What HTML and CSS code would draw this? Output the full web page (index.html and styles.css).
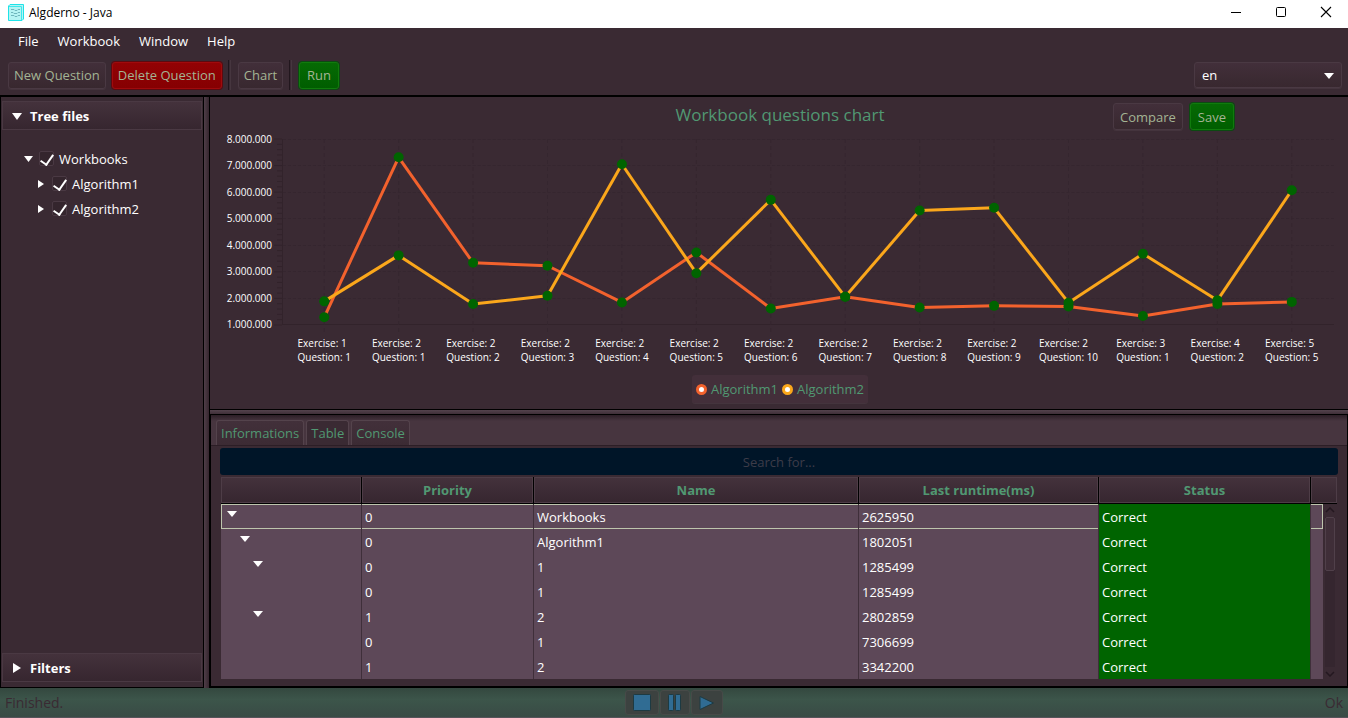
FILE: index.html
```html
<!DOCTYPE html>
<html lang="en">
<head>
<meta charset="utf-8">
<title>Algderno - Java</title>
<link rel="stylesheet" href="styles.css">
</head>
<body>
<header class="titlebar">
  <svg class="app-icon" width="16" height="17" viewBox="0 0 16 17" aria-hidden="true">
    <path d="M2 0.500H15.500V15L14 16.500H0.500V2Z" fill="#b5f3f3" stroke="#1fe3e8"/>
    <path d="M1 2.500H13.500V16" fill="none" stroke="#3ee9ec"/>
    <path d="M3 5.500h3l1 1h2l1-1h2M3 8.500h2l1 1h3l1-1h2M3 11.500h3l1 1h2l1-1h2" fill="none" stroke="#6fb6bd"/>
  </svg>
  <h1 class="window-title">Algderno - Java</h1>
  <div class="window-controls">
    <button class="window-button" aria-label="Minimize"><svg width="12" height="12"><path d="M1 6.500h10" stroke="#000"/></svg></button>
    <button class="window-button" aria-label="Maximize"><svg width="12" height="12"><rect x="1.500" y="1.500" width="9" height="9" rx="1" fill="none" stroke="#000"/></svg></button>
    <button class="window-button" aria-label="Close"><svg width="12" height="12"><path d="M1 1l10 10M11 1L1 11" stroke="#000" stroke-width="1.100"/></svg></button>
  </div>
</header>

<nav class="menubar">
  <button class="menu">File</button>
  <button class="menu">Workbook</button>
  <button class="menu">Window</button>
  <button class="menu">Help</button>
</nav>

<div class="toolbar">
  <button class="btn">New Question</button>
  <button class="btn btn-danger">Delete Question</button>
  <span class="separator"></span>
  <button class="btn">Chart</button>
  <span class="separator"></span>
  <button class="btn btn-ok">Run</button>
  <div class="language">
    <select class="language-select" aria-label="Language"><option>en</option></select>
    <svg class="language-arrow" width="10" height="6" aria-hidden="true"><path d="M0 0H10L5 6Z" fill="#fff"/></svg>
  </div>
</div>

<main class="workspace">
  <aside class="sidebar">
    <button class="pane-title"><svg width="10" height="10"><path d="M0 2H10L5 9Z" fill="#fff"/></svg>Tree files</button>
    <ul class="tree">
      <li class="tree-row"><svg width="10" height="10"><path d="M1 2H10L5.500 8Z" fill="#fff"/></svg><label class="tree-label"><input class="check" type="checkbox" checked>Workbooks</label></li>
      <li class="tree-row tree-child"><svg width="10" height="10"><path d="M2 1V9L8 5Z" fill="#fff"/></svg><label class="tree-label"><input class="check" type="checkbox" checked>Algorithm1</label></li>
      <li class="tree-row tree-child"><svg width="10" height="10"><path d="M2 1V9L8 5Z" fill="#fff"/></svg><label class="tree-label"><input class="check" type="checkbox" checked>Algorithm2</label></li>
    </ul>
    <button class="pane-title pane-last"><svg width="10" height="10"><path d="M1 0V10L9 5Z" fill="#fff"/></svg>Filters</button>
  </aside>
  <div class="divider-v"></div>

  <div class="content">
    <section class="chart">
      <div class="chart-head">
        <h2 class="chart-title">Workbook questions chart</h2>
        <div class="chart-actions">
          <button class="btn">Compare</button>
          <button class="btn btn-ok">Save</button>
        </div>
      </div>
      <div class="chart-body">
        <div class="y-axis">
          <span>8.000.000</span><span>7.000.000</span><span>6.000.000</span><span>5.000.000</span><span>4.000.000</span><span>3.000.000</span><span>2.000.000</span><span>1.000.000</span>
        </div>
        <div class="plot">
          <div class="grid-rows"><i></i><i></i><i></i><i></i><i></i><i></i><i></i></div>
          <svg class="plot-lines" id="plot" role="img" aria-label="Runtime of each question for both algorithms"></svg>
        </div>
        <div class="x-axis">
          <span>Exercise: 1<br>Question: 1</span>
          <span>Exercise: 2<br>Question: 1</span>
          <span>Exercise: 2<br>Question: 2</span>
          <span>Exercise: 2<br>Question: 3</span>
          <span>Exercise: 2<br>Question: 4</span>
          <span>Exercise: 2<br>Question: 5</span>
          <span>Exercise: 2<br>Question: 6</span>
          <span>Exercise: 2<br>Question: 7</span>
          <span>Exercise: 2<br>Question: 8</span>
          <span>Exercise: 2<br>Question: 9</span>
          <span>Exercise: 2<br>Question: 10</span>
          <span>Exercise: 3<br>Question: 1</span>
          <span>Exercise: 4<br>Question: 2</span>
          <span>Exercise: 5<br>Question: 5</span>
        </div>
      </div>
      <div class="legend">
        <span class="legend-item"><i class="symbol symbol-1"></i>Algorithm1</span>
        <span class="legend-item"><i class="symbol symbol-2"></i>Algorithm2</span>
      </div>
    </section>
    <div class="divider-h"></div>

    <section class="details">
      <div class="tabs" role="tablist">
        <button class="tab" role="tab">Informations</button>
        <button class="tab tab-active" role="tab" aria-selected="true">Table</button>
        <button class="tab" role="tab">Console</button>
      </div>
      <div class="tab-body">
        <input class="search" type="text" placeholder="Search for..." aria-label="Search">
        <div class="table-wrap">
          <table class="results">
            <colgroup><col class="c-tree"><col class="c-priority"><col><col class="c-runtime"><col class="c-status"><col class="c-end"></colgroup>
            <thead><tr><th></th><th>Priority</th><th>Name</th><th>Last runtime(ms)</th><th>Status</th><th></th></tr></thead>
            <tbody>
              <tr class="focused"><td><svg class="level-0" width="10" height="10"><path d="M0 1H10L5 7Z" fill="#fff"/></svg></td><td>0</td><td>Workbooks</td><td>2625950</td><td class="correct">Correct</td><td></td></tr>
              <tr><td><svg class="level-1" width="10" height="10"><path d="M0 1H10L5 7Z" fill="#fff"/></svg></td><td>0</td><td>Algorithm1</td><td>1802051</td><td class="correct">Correct</td><td></td></tr>
              <tr><td><svg class="level-2" width="10" height="10"><path d="M0 1H10L5 7Z" fill="#fff"/></svg></td><td>0</td><td>1</td><td>1285499</td><td class="correct">Correct</td><td></td></tr>
              <tr><td></td><td>0</td><td>1</td><td>1285499</td><td class="correct">Correct</td><td></td></tr>
              <tr><td><svg class="level-2" width="10" height="10"><path d="M0 1H10L5 7Z" fill="#fff"/></svg></td><td>1</td><td>2</td><td>2802859</td><td class="correct">Correct</td><td></td></tr>
              <tr><td></td><td>0</td><td>1</td><td>7306699</td><td class="correct">Correct</td><td></td></tr>
              <tr><td></td><td>1</td><td>2</td><td>3342200</td><td class="correct">Correct</td><td></td></tr>
            </tbody>
          </table>
          <div class="scrollbar">
            <svg width="10" height="6"><path d="M1 5L5 1L9 5" fill="none" stroke="#241820" stroke-width="1.500"/></svg>
            <div class="track"><div class="thumb"></div></div>
            <svg width="10" height="6"><path d="M1 1L5 5L9 1" fill="none" stroke="#241820" stroke-width="1.500"/></svg>
          </div>
        </div>
      </div>
    </section>
  </div>
</main>

<footer class="statusbar">
  <span>Finished.</span>
  <div class="player">
    <button class="player-button" aria-label="Stop"><svg width="18" height="18"><rect x="0.500" y="0.500" width="17" height="16" rx="1" fill="#306c93" stroke="#1d3a42"/></svg></button>
    <button class="player-button" aria-label="Pause"><svg width="14" height="18"><rect x="0.500" y="0.500" width="5" height="16" rx="1" fill="#306c93" stroke="#1d3a42"/><rect x="7.500" y="0.500" width="5" height="16" rx="1" fill="#306c93" stroke="#1d3a42"/></svg></button>
    <button class="player-button" aria-label="Play"><svg width="16" height="16"><path d="M1 1.500V14.500L14.500 8Z" fill="#306c93" stroke="#1d3a42"/></svg></button>
  </div>
  <span class="status-right">Ok</span>
</footer>
<script src="chart.js"></script>
</body>
</html>
```

FILE: styles.css
```css
* { box-sizing: border-box; }

body {
  margin: 0;
  min-height: 100vh;
  display: flex;
  flex-direction: column;
  background: #3a2a33;
  color: #fff;
  font: 13px/18px "Open Sans", "Noto Sans", sans-serif;
}

button, input, select { font: inherit; color: inherit; margin: 0; }
button { border: 0; background: none; padding: 0; }
svg { display: block; flex: none; }

.titlebar {
  display: flex;
  align-items: center;
  height: 28px;
  padding-left: 8px;
  gap: 5px;
  background: #fff;
  color: #000;
}
.app-icon { margin-bottom: 3px; }
.window-title { margin: 0 auto 2px 0; font-size: 12px; font-weight: 400; }
.window-controls { display: flex; margin-bottom: 4px; }
.window-button { display: flex; justify-content: center; width: 45px; }

.menubar { display: flex; height: 27px; padding: 0 0 2px 8px; }
.menu { padding: 0 9px 0 10px; }

.toolbar {
  display: flex;
  align-items: center;
  gap: 6px;
  height: 42px;
  padding: 0 6px 0 8px;
  border-bottom: 2px solid #000;
}
.btn {
  height: 27px;
  padding: 0 6px;
  border: 1px solid #4a3943;
  border-radius: 3px;
  background: linear-gradient(#422f3a, #38282f);
  box-shadow: 0 1px 0 #44343d;
  color: #a4b494;
}
.toolbar .btn { padding: 0 5px; }
.btn-danger { background: linear-gradient(#920204, #860002); border-color: #a10a0c; box-shadow: 0 0 0 1px #5c0a10; }
.btn-ok, .toolbar .btn-ok { padding: 0 7px; }
.btn-ok { background: linear-gradient(#066a04, #005e00); border-color: #107c0c; box-shadow: 0 0 0 1px #0c4a12; }
.separator { width: 3px; height: 30px; margin-right: 1px; border-left: 1px solid #21161d; border-right: 1px solid #46363f; }
.language { position: relative; width: 148px; margin-left: auto; }
.language-select {
  display: block;
  appearance: none;
  width: 100%;
  height: 26px;
  padding: 0 7px;
  border: 1px solid #4a3943;
  border-radius: 3px;
  background: linear-gradient(#422f3a, #38282f);
  box-shadow: 0 1px 0 #44343d;
}
.language-arrow { position: absolute; right: 8px; top: 11px; }

.workspace { flex: 1; display: flex; }
.sidebar {
  display: flex;
  flex-direction: column;
  width: 204px;
  padding: 4px 1px 5px;
  border: 1px solid #000;
  border-width: 0 1px 1px;
}
.pane-title {
  display: flex;
  align-items: center;
  gap: 8px;
  height: 29px;
  padding: 0 9px;
  border: 1px solid #4a3943;
  background: linear-gradient(#44323c, #36262f);
  font-weight: 700;
}
.pane-last { margin-top: auto; }
.tree { margin: 0; padding: 16px 0 0 21px; list-style: none; }
.tree-row { display: flex; align-items: center; gap: 6px; height: 25px; }
.tree-child { padding-left: 13px; }
.tree-label { display: flex; align-items: center; gap: 5px; }
.check {
  appearance: none;
  width: 15px;
  height: 15px;
  border: 1px solid #4a3943;
  border-radius: 2px;
  background: #34252d;
}
.check:checked::before {
  content: "";
  display: block;
  width: 6px;
  height: 11px;
  margin: 0 0 0 3px;
  border: solid #fff;
  border-width: 0 2px 2px 0;
  transform: rotate(35deg);
}
.divider-v { width: 6px; border-right: 1px solid #000; background: linear-gradient(90deg, #4f3e48, #36262f); }

.content { flex: 1; min-width: 0; display: flex; flex-direction: column; }
.chart { display: flex; flex-direction: column; padding: 4px 14px 6px 16px; }
.chart-head { display: grid; height: 36px; }
.chart-title {
  grid-area: 1 / 1;
  justify-self: center;
  margin: 0;
  font-size: 17px;
  line-height: 28px;
  font-weight: 400;
  color: #519872;
}
.chart-actions { grid-area: 1 / 1; justify-self: end; display: flex; gap: 7px; margin-right: 100px; padding-top: 2px; }
.chart-body { display: grid; grid-template-columns: 56px 1fr; grid-template-rows: 186px auto; padding-top: 2px; }
.y-axis {
  display: flex;
  flex-direction: column;
  justify-content: space-between;
  margin: -7px 10px -6px 0;
  text-align: right;
  font-size: 10px;
  line-height: 14px;
}
.plot { display: grid; border-left: 1px solid #32232b; }
.grid-rows { grid-area: 1 / 1; display: grid; grid-template-rows: repeat(7, 1fr); border-bottom: 1px solid #32232b; }
.grid-rows i { border-top: 1px dashed #35262f; }
.plot-lines { grid-area: 1 / 1; width: calc(100% - 9px); height: 100%; margin: 0 5px 0 4px; overflow: visible; }
.grid-col { stroke: #35262f; stroke-dasharray: 4 3; }
.series { stroke-width: 3; }
.series-1 { stroke: #f3622d; }
.series-2 { stroke: #fba71b; }
.marker { fill: #006400; }
.x-axis {
  grid-column: 2;
  display: grid;
  grid-template-columns: repeat(14, 1fr);
  justify-items: center;
  padding: 11px 5px 0;
  font-size: 10px;
  line-height: 14px;
  white-space: nowrap;
}
.legend {
  align-self: center;
  display: flex;
  gap: 4px;
  height: 28px;
  margin-top: 11px;
  padding: 4px;
  border-radius: 3px;
  background: #432f3a;
  box-shadow: 0 1px 0 #44343d;
  color: #519872;
}
.legend-item { display: flex; align-items: center; gap: 4px; }
.symbol { width: 11px; height: 11px; border: 3px solid #f3622d; border-radius: 50%; background: #fff; }
.symbol-2 { border-color: #fba71b; }
.divider-h { height: 6px; border: solid #000; border-width: 1px 0; background: linear-gradient(#54434d, #3f2f38); }

.details { flex: 1; display: flex; flex-direction: column; border: 1px solid #000; border-width: 0 1px 2px; }
.tabs {
  display: flex;
  align-items: flex-end;
  gap: 2px;
  height: 31px;
  padding-left: 5px;
  border-bottom: 1px solid #2c1e26;
  background: linear-gradient(#2c1e26, #47353f 6px);
}
.tab {
  height: 25px;
  padding: 0 4px;
  border: 1px solid #54434c;
  border-bottom: 0;
  border-radius: 3px 3px 0 0;
  background: linear-gradient(#42303a, #3c2b34);
  color: #519872;
}
.tab-active { background: #3a2a33; }
.tab-body { flex: 1; padding: 2px 9px 6px; }
.search {
  display: block;
  width: 100%;
  height: 27px;
  border: 0;
  border-radius: 3px;
  background: #001528;
  text-align: center;
}
.search::placeholder { color: #3d3c48; opacity: 1; }
.table-wrap { position: relative; margin: 2px 1px 0; }
.results { width: 100%; table-layout: fixed; border-collapse: separate; border-spacing: 0; }
.c-tree { width: 141px; }
.c-priority { width: 172px; }
.c-runtime { width: 240px; }
.c-status { width: 212px; }
.c-end { width: 26px; }
.results th {
  height: 27px;
  padding: 0;
  border-right: 1px solid #000;
  border-bottom: 1px solid #000;
  background: linear-gradient(#44323c, #36262f);
  box-shadow: inset 0 0 0 1px #4e3d47;
  color: #519872;
}
.results th:last-child { border-right: 0; }
.results td { height: 25px; padding: 0 3px; border-right: 1px solid #3f2f3a; background: #5d4858; }
.results td:last-child { border-right: 0; }
.focused td { box-shadow: inset 0 1px #bec5ad, inset 0 -1px #bec5ad; }
.focused td:first-child { box-shadow: inset 1px 1px #bec5ad, inset 0 -1px #bec5ad; }
.results .correct { background: #006400; box-shadow: none; }
.level-0 { margin: 0 0 4px 3px; }
.level-1 { margin: 0 0 4px 16px; }
.level-2 { margin: 0 0 4px 29px; }
.scrollbar {
  position: absolute;
  top: 27px;
  right: 0;
  bottom: 0;
  width: 14px;
  display: flex;
  flex-direction: column;
  align-items: center;
  gap: 4px;
  padding: 3px 0 2px;
  background: #3a2a33;
}
.scrollbar::before { content: ""; position: absolute; left: -1px; top: 0; width: 1px; height: 25px; background: #bec5ad; }
.track { flex: 1; width: 10px; background: #35262f; }
.thumb { height: 36%; border: 1px solid #50404a; border-radius: 2px; background: #3f2e38; }

.statusbar {
  display: grid;
  grid-template-columns: 1fr auto 1fr;
  align-items: center;
  height: 30px;
  padding: 0 5px;
  border-bottom: 1px solid #55545a;
  background: linear-gradient(#34483f, #3c554a 40%, #394b45);
  color: #3a2a33;
  font-size: 14px;
}
.status-right { justify-self: end; }
.player { display: flex; gap: 1px; }
.player-button {
  display: flex;
  align-items: center;
  justify-content: center;
  height: 25px;
  padding: 0 7px;
  border: 1px solid #474a48;
  border-radius: 3px;
  background: #3c4240;
}
```

FILE: chart.js
```js
const series = [
  [1.29, 7.31, 3.34, 3.23, 1.85, 3.73, 1.62, 2.06, 1.66, 1.72, 1.7, 1.34, 1.79, 1.87],
  [1.89, 3.62, 1.79, 2.1, 7.05, 2.95, 5.71, 2.06, 5.31, 5.41, 1.84, 3.68, 1.93, 6.07]
];
const MIN = 1;
const MAX = 8;
const plot = document.getElementById('plot');

const x = i => (i + 0.5) / series[0].length * 100 + '%';
const y = v => (MAX - v) / (MAX - MIN) * 100 + '%';

function add(tag, attributes) {
  const node = document.createElementNS('http://www.w3.org/2000/svg', tag);
  for (const name in attributes) node.setAttribute(name, attributes[name]);
  plot.appendChild(node);
}

series[0].forEach((v, i) => add('line', { class: 'grid-col', x1: x(i), x2: x(i), y1: 0, y2: '104%' }));

for (let k = 0; k <= 35; k++) {
  add('line', { class: 'tick', x1: k % 5 ? -10 : -13, x2: -5, y1: k / 35 * 100 + '%', y2: k / 35 * 100 + '%', stroke: '#32232b' });
}

series.forEach((values, s) => {
  for (let i = 1; i < values.length; i++) {
    add('line', { class: 'series series-' + (s + 1), x1: x(i - 1), y1: y(values[i - 1]), x2: x(i), y2: y(values[i]) });
  }
});
series.forEach(values => values.forEach((v, i) => add('circle', { class: 'marker', cx: x(i), cy: y(v), r: 5 })));
```
